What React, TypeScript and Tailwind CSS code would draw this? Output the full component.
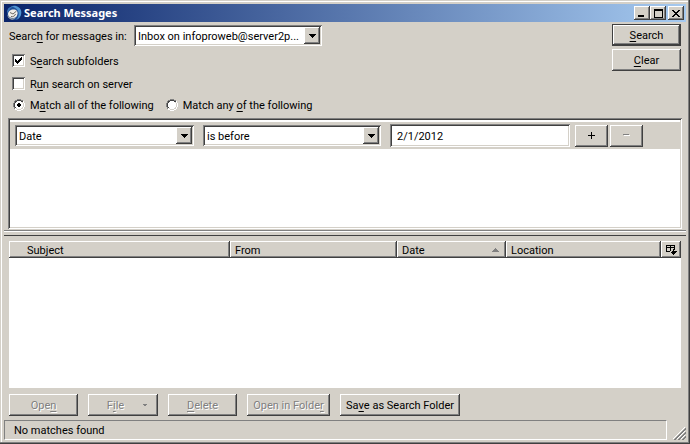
import { useState } from "react";
import type { ReactNode } from "react";
import clsx from "clsx";

const raised =
  "bg-[#d4d0c8] shadow-[inset_-1px_-1px_#404040,inset_1px_1px_#fff,inset_-2px_-2px_#808080]";
const sunken =
  "bg-white shadow-[inset_1px_1px_#808080,inset_-1px_-1px_#fff,inset_2px_2px_#404040,inset_-2px_-2px_#d4d0c8]";

function Key({ children }: { children: ReactNode }) {
  return <span className="underline decoration-1 underline-offset-2">{children}</span>;
}

interface ButtonProps {
  children: ReactNode;
  className?: string;
  disabled?: boolean;
  primary?: boolean;
  label?: string;
  onClick?: () => void;
}

function Button({ children, className, disabled, primary, label, onClick }: ButtonProps) {
  return (
    <button
      type="button"
      aria-label={label}
      disabled={disabled}
      onClick={onClick}
      className={clsx(
        "flex shrink-0 items-center justify-center whitespace-nowrap",
        primary
          ? "bg-[#d4d0c8] shadow-[inset_0_0_0_1px_#404040,inset_-2px_-2px_#404040,inset_2px_2px_#fff,inset_-3px_-3px_#808080]"
          : raised,
        disabled && "text-[#808080] [text-shadow:1px_1px_#fff]",
        className,
      )}
    >
      {children}
    </button>
  );
}

interface DropdownProps {
  id?: string;
  label?: string;
  options: string[];
  className?: string;
}

function Dropdown({ id, label, options, className }: DropdownProps) {
  return (
    <div className={clsx("relative h-[21px] shrink-0 p-[2px]", sunken, className)}>
      <select
        id={id}
        aria-label={label}
        className="block h-[17px] w-full appearance-none bg-transparent pt-[2px] pr-4 pl-[2px] outline-none"
      >
        {options.map((o) => (
          <option key={o}>{o}</option>
        ))}
      </select>
      <span
        className={clsx(
          "pointer-events-none absolute top-[2px] right-[2px] flex h-[17px] w-4 items-center justify-center",
          raised,
        )}
      >
        <svg width="7" height="4" viewBox="0 0 7 4" shapeRendering="crispEdges">
          <path d="M0 0h7v1H6v1H5v1H4v1H3V3H2V2H1V1H0z" />
        </svg>
      </span>
    </div>
  );
}

function Check({ children, checked }: { children: ReactNode; checked?: boolean }) {
  const [on, setOn] = useState(!!checked);
  return (
    <label className="flex h-[23px] items-center gap-[5px]">
      <span className={clsx("relative flex size-[13px] items-center justify-center", sunken)}>
        <input
          type="checkbox"
          checked={on}
          onChange={(e) => setOn(e.target.checked)}
          className="absolute inset-0 appearance-none"
        />
        {on && (
          <svg width="7" height="7" viewBox="0 0 7 7" shapeRendering="crispEdges" className="pointer-events-none">
            <path d="M0 2h1v1h1v1h1V3h1V2h1V1h1V0h1v3H6v1H5v1H4v1H3v1H2V6H1V5H0z" />
          </svg>
        )}
      </span>
      <span className="pt-[2px]">{children}</span>
    </label>
  );
}

interface RadioProps {
  children: ReactNode;
  checked: boolean;
  onSelect: () => void;
}

function Radio({ children, checked, onSelect }: RadioProps) {
  return (
    <label className="flex items-center gap-[5px]">
      <span className="relative size-3">
        <input
          type="radio"
          name="match"
          checked={checked}
          onChange={onSelect}
          className="absolute inset-0 appearance-none"
        />
        <svg width="12" height="12" viewBox="0 0 12 12" shapeRendering="crispEdges" className="pointer-events-none block">
          <path fill="#fff" d="M4 1h4v1h2v2h1v4h-1v2H8v1H4v-1H2V8H1V4h1V2h2z" />
          <path fill="#808080" d="M4 0h4v1h2v1H8V1H4v1H2v2H1v4h1v2H1V8H0V4h1V2h1V1h2z" />
          <path fill="#404040" d="M4 1h4v1h2v1H8V2H4v1H3v1H2v4h1v1H2V8H1V4h1V2h2z" />
          <path fill="#d4d0c8" d="M10 3v1h1v4h-1v2H8v1H4v-1H3V9h1v1h4V9h1V8h1V4H9V3z" />
          <path fill="#fff" d="M10 2h1v2h1v4h-1v2h-1v1H8v1H4v-1H2v-1h2v1h4v-1h2V8h1V4h-1z" />
          {checked && <path d="M5 4h2v1h1v2H7v1H5V7H4V5h1z" />}
        </svg>
      </span>
      <span className="pt-[2px]">{children}</span>
    </label>
  );
}

function TitleBar() {
  return (
    <header className="flex h-[18px] shrink-0 items-center bg-linear-to-r/srgb from-[#0a246a] to-[#a6caf0] px-[2px] text-white">
      <svg width="16" height="16" viewBox="0 0 16 16">
        <circle cx="8" cy="8" r="7" fill="#1f4f96" />
        <path d="M5 1.500C9-.5 15 2 15.300 7c.2 4-2.300 7-5.300 8 3-3 3.500-7 1.500-10C10 3 8 2 5 1.500z" fill="#4f94d2" />
        <path d="M1 8C1 3 4 1 8 1.500 6 2 4 3 3.500 5z" fill="#3a74b8" />
        <path d="M2 9c0-2.500 2.500-4.500 5.500-4.500S12 6.500 11.500 9 10 13 7 13s-5-1.500-5-4z" fill="#efede8" />
        <path d="M4 7.500 7 9l3.500-3M5 11.500c2 .5 4-.5 4.500-2.500" fill="none" stroke="#6b6964" />
        <path d="M1.500 9.500c1 3.500 4.500 5 8 3-1 2-3.500 2.800-5.500 1.500S1.500 12 1.500 9.500z" fill="#a9a9a6" />
      </svg>
      <h1 className="ml-[2px] grow font-['Noto_Sans',sans-serif] text-[11px] leading-[18px] font-bold">
        Search Messages
      </h1>
      <div className="flex text-black">
        <Button label="Minimize" className="h-[14px] w-4">
          <svg width="10" height="8" shapeRendering="crispEdges">
            <path d="M1 6h6v2H1z" />
          </svg>
        </Button>
        <Button label="Maximize" className="h-[14px] w-4">
          <svg width="9" height="9" shapeRendering="crispEdges">
            <path fillRule="evenodd" d="M0 0h9v9H0zM1 2v6h7V2z" />
          </svg>
        </Button>
        <Button label="Close" className="ml-[2px] h-[14px] w-4">
          <svg width="8" height="7" shapeRendering="crispEdges">
            <path d="M0 0h2v1h1v1h2V1h1V0h2v1H7v1H6v1H5v1h1v1h1v1h1v1H6V6H5V5H3v1H2v1H0V6h1V5h1V4h1V3H2V2H1V1H0z" />
          </svg>
        </Button>
      </div>
    </header>
  );
}

function ResizeGrip() {
  return (
    <svg width="13" height="13" viewBox="0 0 13 13" className="self-end">
      <path d="M0 12 12 0M4 12l8-8M8 12l4-4" stroke="#fff" />
      <path d="m1 13 12-12M2 13 13 2M5 13l8-8M6 13l7-7M9 13l4-4M10 13l3-3" stroke="#808080" />
    </svg>
  );
}

const columns = [
  { name: "Subject", className: "pl-[18px]" },
  { name: "From", className: "w-[167px] pl-[5px]" },
  { name: "Date", className: "w-[109px] pl-[5px]", sorted: true },
  { name: "Location", className: "w-[155px] pl-[5px]" },
];

export default function App() {
  const [match, setMatch] = useState("all");
  const [value, setValue] = useState("2/1/2012");

  return (
    <div className="flex h-screen flex-col bg-[#d4d0c8] p-1 font-[Roboto,sans-serif] text-[11px] leading-[15px] text-black shadow-[inset_-1px_-1px_#404040,inset_-2px_-2px_#808080,inset_1px_1px_#d4d0c8,inset_2px_2px_#fff]">
      <TitleBar />

      <section className="flex shrink-0 justify-between px-[5px]">
        <div>
          <div className="flex items-center pt-[3px]">
            <label htmlFor="scope" className="w-[125px] pt-[2px] whitespace-nowrap">
              Searc<Key>h</Key> for messages in:
            </label>
            <Dropdown id="scope" options={["Inbox on infoproweb@server2p..."]} className="w-[188px]" />
          </div>
          <div className="pt-[3px] pl-[3px]">
            <Check checked>
              S<Key>e</Key>arch subfolders
            </Check>
            <Check>
              R<Key>u</Key>n search on server
            </Check>
          </div>
          <div className="flex h-[19px] items-center gap-3 pl-1">
            <Radio checked={match === "all"} onSelect={() => setMatch("all")}>
              M<Key>a</Key>tch all of the following
            </Radio>
            <Radio checked={match === "any"} onSelect={() => setMatch("any")}>
              Match any <Key>o</Key>f the following
            </Radio>
          </div>
        </div>
        <div className="flex flex-col gap-[3px] pt-[2px]">
          <Button primary className="h-[22px] w-[69px]">
            <Key>S</Key>earch
          </Button>
          <Button className="h-[22px] w-[69px]">
            <Key>C</Key>lear
          </Button>
        </div>
      </section>

      <section className={clsx("mx-1 mt-[4px] h-[111px] shrink-0 p-[2px] pt-1", sunken)}>
        <div className="flex h-[27px] items-center bg-[#d4d0c8] pl-[5px]">
          <Dropdown label="Field" options={["Date", "Subject", "From"]} className="w-[179px]" />
          <Dropdown label="Condition" options={["is before", "is after", "is"]} className="ml-[9px] w-[178px]" />
          <input
            aria-label="Value"
            value={value}
            onChange={(e) => setValue(e.target.value)}
            className={clsx("ml-[9px] h-[23px] w-[180px] px-[7px] pt-px outline-none", sunken)}
          />
          <Button label="Add rule" className="ml-[5px] h-[22px] w-[33px]">
            <svg width="7" height="7" shapeRendering="crispEdges">
              <path d="M0 3h7v1H0zM3 0h1v7H3z" />
            </svg>
          </Button>
          <Button label="Remove rule" disabled className="ml-[2px] h-[22px] w-[33px]">
            <svg width="7" height="3" shapeRendering="crispEdges">
              <path fill="#fff" d="M1 1h6v1H1z" />
              <path fill="#808080" d="M0 0h6v1H0z" />
            </svg>
          </Button>
        </div>
      </section>

      <div className="mt-px h-[6px] shrink-0 border-t border-b border-t-[#808080] border-b-[#404040] shadow-[inset_0_1px_#fff]" />

      <section className="mx-[5px] mt-[5px] grow bg-white">
        <table className="w-full table-fixed border-collapse">
          <thead>
            <tr className="h-[17px]">
              {columns.map((c) => (
                <th key={c.name} className={clsx("p-0 text-left font-normal", raised, c.className)}>
                  <div className="flex h-[17px] items-center justify-between pr-[7px]">
                    <span className="pt-[2px]">{c.name}</span>
                    {c.sorted && (
                      <svg width="7" height="4" shapeRendering="crispEdges">
                        <path fill="#808080" d="M3 0h1v1h1v1h1v1h1v1H0V3h1V2h1V1h1z" />
                      </svg>
                    )}
                  </div>
                </th>
              ))}
              <th className="w-5 p-0">
                <Button label="Select columns to display" className="h-[17px] w-full">
                  <svg width="11" height="10" shapeRendering="crispEdges">
                    <path d="M0 0h9v5H8V3H5v3h1v1H0zM1 1v1h3V1zm4 0v1h3V1zM1 3v3h3V3zM7 4h1v2h3v1h-1v1H9v1H8v1H7V9H6V8H5V7H4V6h3z" fillRule="evenodd" />
                  </svg>
                </Button>
              </th>
            </tr>
          </thead>
          <tbody />
        </table>
      </section>

      <div className="mx-[5px] mt-[6px] flex shrink-0 gap-[10px]">
        <Button disabled className="h-[22px] w-[69px]">
          Ope<Key>n</Key>
        </Button>
        <Button disabled className="h-[22px] w-[70px] gap-[18px] pl-2">
          <span>
            F<Key>i</Key>le
          </span>
          <svg width="5" height="3" shapeRendering="crispEdges">
            <path fill="#808080" d="M1 0h4v1H4v1H2V1H1z" />
          </svg>
        </Button>
        <Button disabled className="h-[22px] w-[69px]">
          <Key>D</Key>elete
        </Button>
        <Button disabled className="h-[22px] w-[83px]">
          Open in Folde<Key>r</Key>
        </Button>
        <Button className="h-[22px] w-[120px]">
          Sa<Key>v</Key>e as Search Folder
        </Button>
      </div>

      <footer className="mt-[4px] flex h-5 shrink-0 gap-[6px]">
        <div className="flex grow items-center border border-t-[#808080] border-r-white border-b-white border-l-[#808080] pl-[9px]">
          No matches found
        </div>
        <ResizeGrip />
      </footer>
    </div>
  );
}
